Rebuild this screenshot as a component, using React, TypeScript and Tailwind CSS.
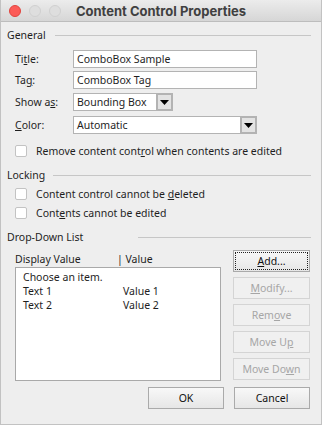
import React from "react";

const font = { fontFamily: '"Noto Sans", "Open Sans", sans-serif' };

function Tri() {
  return (
    <svg width="9" height="5" viewBox="0 0 9 5">
      <path d="M0 0 H9 L4.5 5 Z" fill="#000" />
    </svg>
  );
}

function Checkbox() {
  return <div className="w-[12px] h-[12px] bg-white border border-[#c3c3c3] rounded-[2px] shrink-0" />;
}

function SectionHeader({ label, w }: { label: string; w: string }) {
  return (
    <div className="flex items-center h-[14px] pr-[10px]">
      <span className={`text-[#1e1e1e] ${w}`}>{label}</span>
      <div className="flex-1 h-px bg-[#c6c6c6]" />
    </div>
  );
}

function Btn({ children, disabled, focus, w }: { children: React.ReactNode; disabled?: boolean; focus?: boolean; w?: string }) {
  return (
    <div
      className={`${w ?? "w-[77px]"} h-[22px] flex items-center justify-center border relative whitespace-nowrap ${
        disabled
          ? "border-[#d4d4d4] bg-[#f0f0f0] text-[#a6a6a6]"
          : "border-[#aaaaaa] bg-gradient-to-b from-[#f8f8f8] to-[#e6e6e6] text-[#111]"
      }`}
    >
      {focus && <div className="absolute inset-[1px] border border-dotted border-[#222]" />}
      <span className="relative">{children}</span>
    </div>
  );
}

export default function App() {
  return (
    <div style={font} className="w-[322px] h-[425px] bg-[#eeeeee] border-x border-b border-[#c2c2c2] flex flex-col text-[10.5px] leading-[14px] text-[#1e1e1e] overflow-hidden whitespace-nowrap">
      {/* Title bar */}
      <div className="h-[22px] shrink-0 border-b border-[#bdbdbd] bg-gradient-to-b from-[#ececec] to-[#d6d6d6] grid grid-cols-[1fr_auto_1fr] items-center">
        <div className="flex items-center gap-[8px] pl-[8px]">
          <div className="w-[12px] h-[12px] rounded-full bg-[#fc5b57] border border-[#e0443e]" />
          <div className="w-[12px] h-[12px] rounded-full bg-[#dedede] border border-[#d0d0d0]" />
          <div className="w-[12px] h-[12px] rounded-full bg-[#dedede] border border-[#d0d0d0]" />
        </div>
        <div className="font-bold text-[13px] text-[#404040]" style={{ fontFamily: '"Inter", "Noto Sans", sans-serif' }}>
          Content Control Properties
        </div>
        <div />
      </div>

      <div className="pl-[6px] flex flex-col">
        <div className="mt-[6px]">
          <SectionHeader label="General" w="w-[48px]" />
        </div>

        <div className="pl-[8px] flex flex-col">
          <div className="mt-[8px] flex items-center h-[18px]">
            <span className="w-[58px]">Ti<u>t</u>le:</span>
            <div className="w-[184px] h-[18px] bg-white border border-[#b3b3b3] flex items-center pl-[3px]">ComboBox Sample</div>
          </div>
          <div className="mt-[3px] flex items-center h-[18px]">
            <span className="w-[58px]">Ta<u>g</u>:</span>
            <div className="w-[184px] h-[18px] bg-white border border-[#b3b3b3] flex items-center pl-[3px]">ComboBox Tag</div>
          </div>
          <div className="mt-[4px] flex items-center h-[18px]">
            <span className="w-[58px]">Show a<u>s</u>:</span>
            <div className="w-[100px] h-[18px] bg-white border border-[#b3b3b3] flex items-center">
              <span className="flex-1 pl-[3px]">Bounding Box</span>
              <div className="w-[17px] h-[18px] -mr-px border-2 border-[#b3b3b3] bg-[#e3e3e3] flex items-center justify-center">
                <Tri />
              </div>
            </div>
          </div>
          <div className="mt-[5px] flex items-center h-[18px]">
            <span className="w-[58px]"><u>C</u>olor:</span>
            <div className="w-[184px] h-[18px] bg-white border border-[#b3b3b3] flex items-center">
              <span className="flex-1 pl-[3px]">Automatic</span>
              <div className="w-[17px] h-[18px] -mr-px border-2 border-[#b3b3b3] bg-[#e3e3e3] flex items-center justify-center">
                <Tri />
              </div>
            </div>
          </div>
          <div className="mt-[10px] flex items-center h-[14px] gap-[9px]">
            <Checkbox />
            <span>Remove content cont<u>r</u>ol when contents are edited</span>
          </div>
        </div>

        <div className="mt-[10px]">
          <SectionHeader label="Locking" w="w-[46px]" />
        </div>
        <div className="pl-[8px] flex flex-col">
          <div className="mt-[5px] flex items-center h-[14px] gap-[9px]">
            <Checkbox />
            <span>Content control cannot be <u>d</u>eleted</span>
          </div>
          <div className="mt-[5px] flex items-center h-[14px] gap-[9px]">
            <Checkbox />
            <span>Cont<u>e</u>nts cannot be edited</span>
          </div>
        </div>

        <div className="mt-[10px]">
          <SectionHeader label="Drop-Down List" w="w-[131px]" />
        </div>

        <div className="pl-[8px] mt-[6px] flex">
          <div className="w-[206px] flex flex-col">
            <div className="mt-[2px] h-[14px] flex">
              <span className="w-[102px]">Display Value</span>
              <span>| Value</span>
            </div>
            <div className="mt-[1px] h-[114px] bg-white border border-[#a9a9a9] pt-[2px] pl-[7px] flex flex-col">
              <div className="h-[14px]">Choose an item.</div>
              <div className="h-[14px] flex">
                <span className="w-[100px]">Text 1</span>
                <span>Value 1</span>
              </div>
              <div className="h-[14px] flex">
                <span className="w-[100px]">Text 2</span>
                <span>Value 2</span>
              </div>
            </div>
          </div>
          <div className="ml-[12px] flex flex-col gap-[5px]">
            <Btn focus><u>A</u>dd...</Btn>
            <Btn disabled><u>M</u>odify...</Btn>
            <Btn disabled>Rem<u>o</u>ve</Btn>
            <Btn disabled>Move U<u>p</u></Btn>
            <Btn disabled>Move Do<u>w</u>n</Btn>
          </div>
        </div>

        <div className="mt-[6px] flex justify-end pr-[11px] gap-[10px]">
          <Btn w="w-[76px]">OK</Btn>
          <Btn w="w-[76px]">Cancel</Btn>
        </div>
      </div>
    </div>
  );
}
